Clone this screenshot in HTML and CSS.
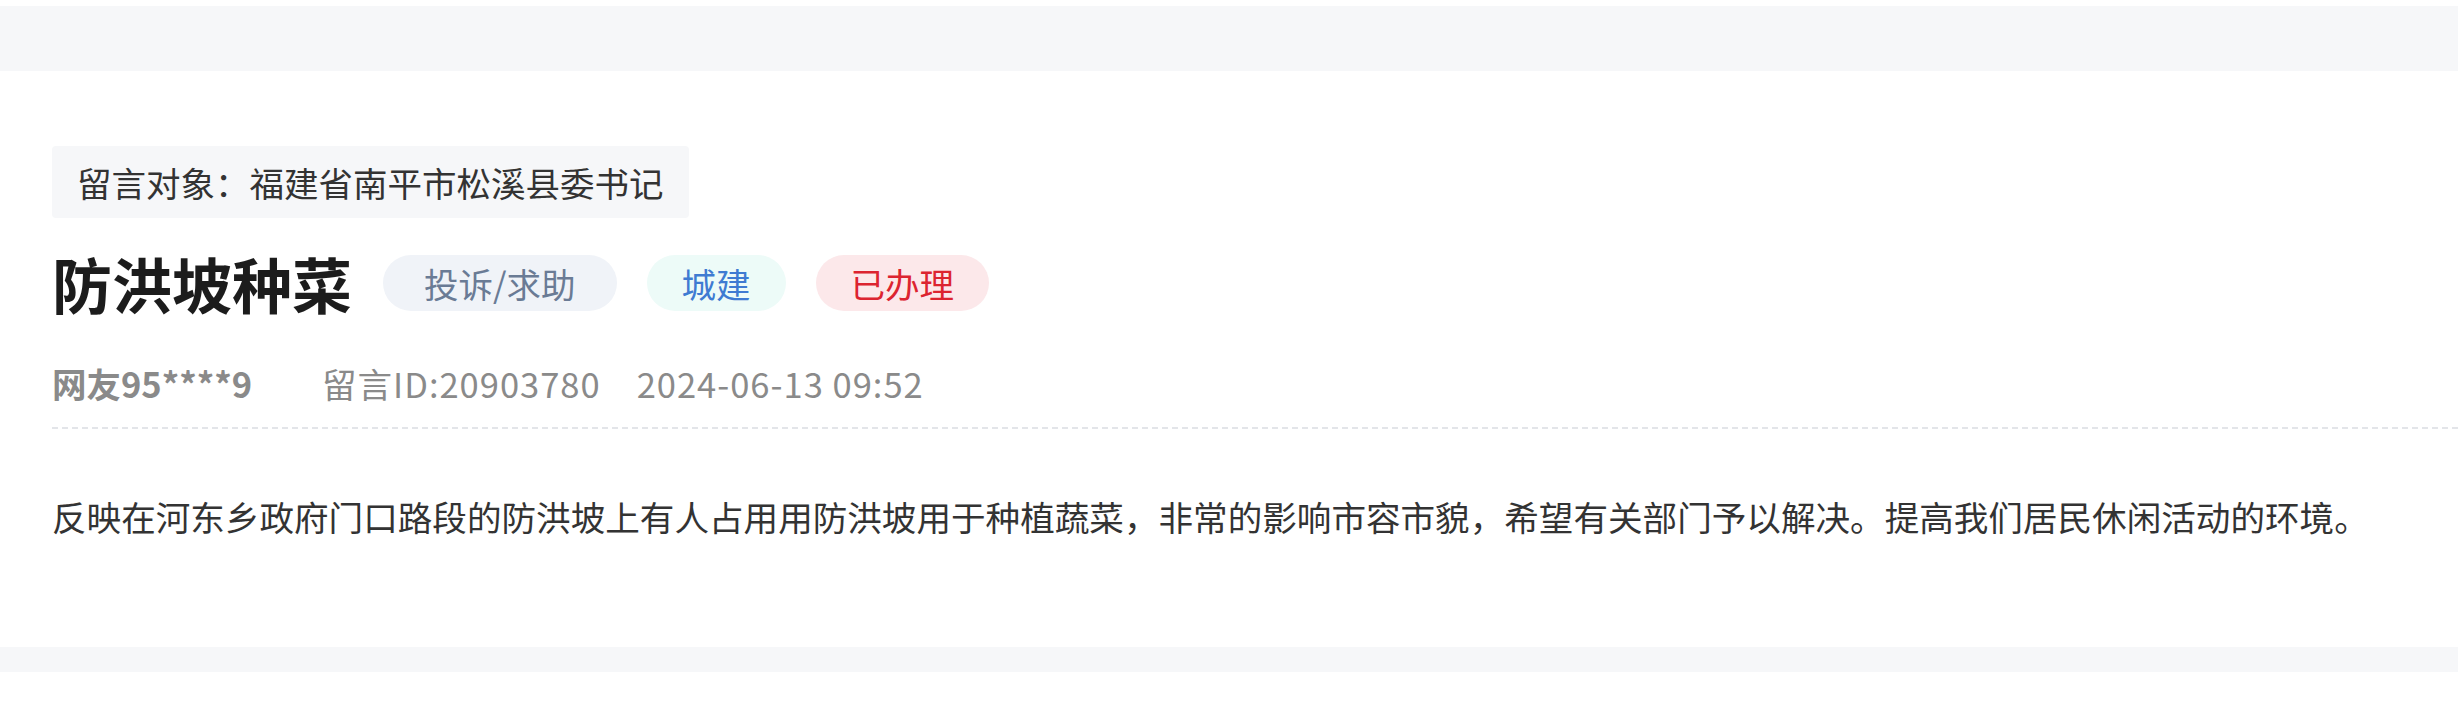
FILE: index.html
```html
<!DOCTYPE html>
<html lang="zh-CN">
<head>
<meta charset="utf-8">
<title>防洪坡种菜</title>
<link rel="stylesheet" href="styles.css">
</head>
<body>
<div class="band band-top"></div>
<main class="card">
  <div class="target">留言对象：福建省南平市松溪县委书记</div>
  <div class="title-row">
    <h1 class="title">防洪坡种菜</h1>
    <div class="pills">
      <span class="pill pill-type">投诉/求助</span>
      <span class="pill pill-domain">城建</span>
      <span class="pill pill-status">已办理</span>
    </div>
  </div>
  <div class="meta">
    <span class="user">网友95****9</span>
    <span class="msg-id">留言ID:20903780</span>
    <span class="date">2024-06-13 09:52</span>
  </div>
  <div class="divider"></div>
  <p class="content">反映在河东乡政府门口路段的防洪坡上有人占用用防洪坡用于种植蔬菜，非常的影响市容市貌，希望有关部门予以解决。提高我们居民休闲活动的环境。</p>
</main>
<div class="band band-bottom"></div>
</body>
</html>
```
FILE: styles.css
```css
* { box-sizing: border-box; }
html, body {
  margin: 0;
  padding: 0;
  background: #ffffff;
}
body {
  font-family: "Noto Sans CJK SC", "Noto Sans", sans-serif;
  color: #333333;
  overflow: hidden;
}
.band {
  background: #f6f7f9;
}
.band-top {
  margin-top: 6px;
  height: 65px;
}
.band-bottom {
  height: 25px;
}
.card {
  display: flex;
  flex-direction: column;
  align-items: flex-start;
  padding: 75px 0 103px 52px;
}
.target {
  height: 72px;
  line-height: 72px;
  padding: 0 25px;
  background: #f6f7f9;
  border-radius: 4px;
  font-size: 34.5px;
  color: #333333;
  white-space: nowrap;
}
.title-row {
  display: flex;
  align-items: center;
  margin-top: 37px;
  height: 56px;
}
.title {
  margin: 0 31px 0 0;
  font-size: 60px;
  line-height: 56px;
  font-weight: 700;
  color: #1c1c1c;
  white-space: nowrap;
}
.pills {
  display: flex;
  gap: 30px;
}
.pill {
  height: 56px;
  line-height: 56px;
  padding: 0 35px;
  border-radius: 28px;
  font-size: 34.5px;
  white-space: nowrap;
}
.pill-type {
  padding: 0 41px;
  background: #f0f3f8;
  color: #6a7b95;
}
.pill-domain {
  background: #edfbf8;
  color: #3f7bd2;
}
.pill-status {
  background: #fce8ea;
  color: #dc2430;
}
.meta {
  display: flex;
  margin-top: 49px;
  height: 46px;
  line-height: 46px;
  font-size: 34.5px;
  color: #8a8a8a;
  white-space: nowrap;
}
.user {
  font-weight: 700;
  margin-right: 70px;
}
.msg-id,
.date {
  letter-spacing: 1px;
}
.date {
  margin-left: 36px;
}
.divider {
  align-self: stretch;
  margin-top: 21px;
  height: 2px;
  background: repeating-linear-gradient(to right, #e3e5e9 0 6px, transparent 6px 10px);
}
.content {
  margin: 59px 0 0 0;
  font-size: 34.6px;
  line-height: 56px;
  color: #333333;
  white-space: nowrap;
}
```
